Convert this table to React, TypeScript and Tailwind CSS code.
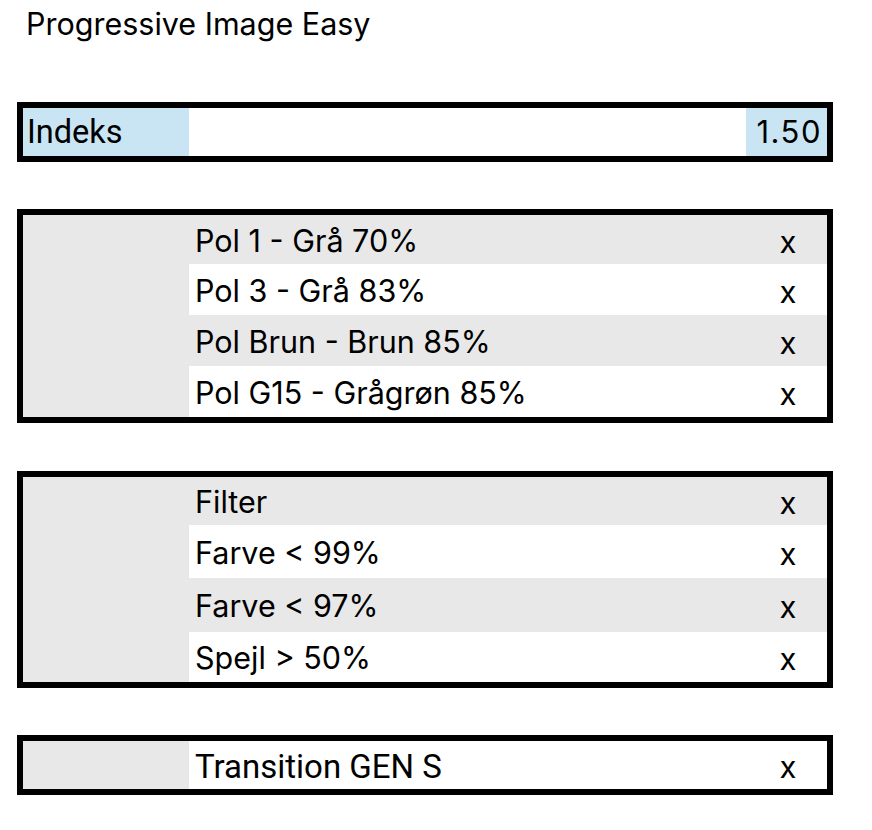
import React from 'react'

type Row = { label: string; h: string; shaded: boolean }

const polRows: Row[] = [
  { label: 'Pol 1 - Grå 70%', h: 'h-[49px]', shaded: true },
  { label: 'Pol 3 - Grå 83%', h: 'h-[51px]', shaded: false },
  { label: 'Pol Brun - Brun 85%', h: 'h-[51px]', shaded: true },
  { label: 'Pol G15 - Grågrøn 85%', h: 'h-[51px]', shaded: false },
]

const filterRows: Row[] = [
  { label: 'Filter', h: 'h-[48px]', shaded: true },
  { label: 'Farve < 99%', h: 'h-[53px]', shaded: false },
  { label: 'Farve < 97%', h: 'h-[54px]', shaded: true },
  { label: 'Spejl > 50%', h: 'h-[50px]', shaded: false },
]

function OptionBox({ rows, roboto }: { rows: Row[]; roboto?: boolean }) {
  return (
    <div className="w-[816px] border-[6px] border-black flex">
      {/* empty shaded label column */}
      <div className="w-[166px] shrink-0 bg-[#e8e8e8]" />
      <div className="flex-1 flex flex-col">
        {rows.map(r => (
          <div
            key={r.label}
            className={`${r.h} flex items-center pt-[3px] ${r.shaded ? 'bg-[#e8e8e8]' : 'bg-white'}`}
          >
            <span
              className={`flex-1 pl-[6px] leading-none ${roboto ? "font-['Roboto'] text-[33px]" : "font-['Inter'] text-[30.5px]"}`}
            >
              {r.label}
            </span>
            <span className="w-[80px] text-center pl-[2px] text-[31px] leading-none font-['Inter']">x</span>
          </div>
        ))}
      </div>
    </div>
  )
}

export default function App() {
  return (
    <div className="w-[872px] h-[830px] bg-white text-black font-['Inter',sans-serif] pl-[17px]">
      <h1 className="pt-[6px] pl-[9px] text-[30.5px] leading-[36px] font-['Inter']">Progressive Image Easy</h1>

      <div className="mt-[60px] w-[816px] h-[60px] border-[6px] border-black flex">
        <div className="w-[166px] bg-[#c9e5f3] flex items-center pl-[4px] text-[32.5px] font-['Roboto']">Indeks</div>
        <div className="flex-1 bg-white" />
        <div className="w-[81px] bg-[#c9e5f3] flex items-center justify-end pr-[5px] text-[31px] tracking-[1.5px] font-['Inter']">1.50</div>
      </div>

      <div className="mt-[47px]">
        <OptionBox rows={polRows} />
      </div>
      <div className="mt-[48px]">
        <OptionBox rows={filterRows} />
      </div>
      <div className="mt-[47px]">
        <OptionBox rows={[{ label: 'Transition GEN S', h: 'h-[48px]', shaded: false }]} roboto />
      </div>
    </div>
  )
}
